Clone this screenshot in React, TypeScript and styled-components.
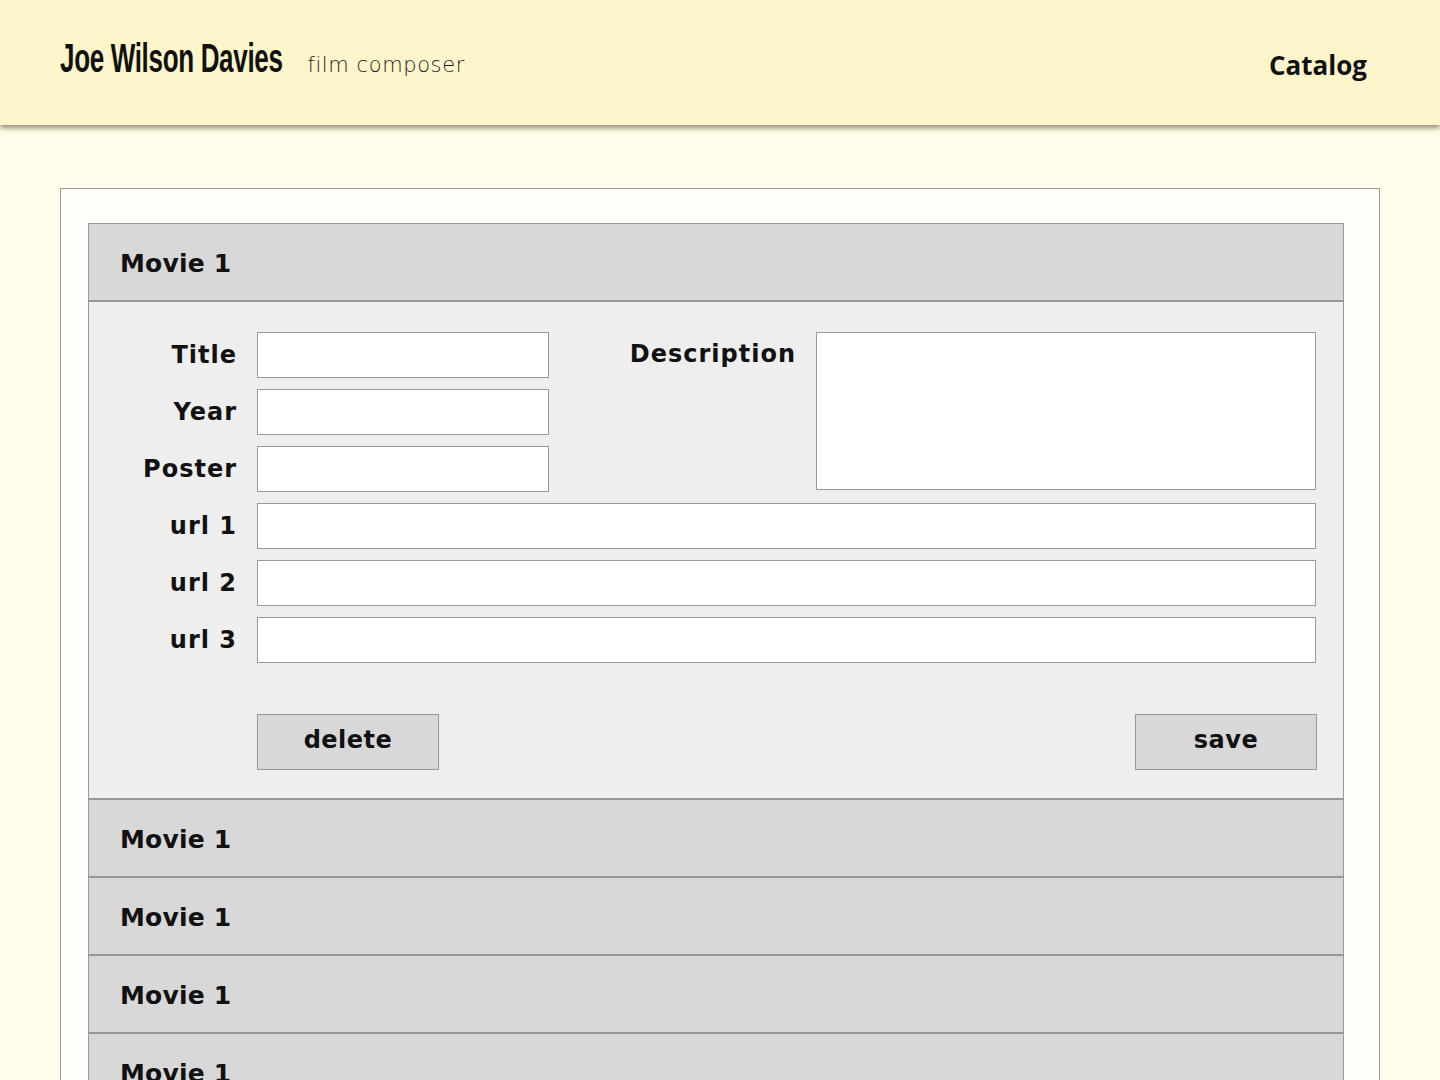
import * as React from "react";
import styled, { createGlobalStyle } from "styled-components";

const GlobalStyle = createGlobalStyle`
  html, body {
    margin: 0;
    padding: 0;
    height: 100%;
    overflow: hidden;
    background: #fffde9;
  }
  * {
    box-sizing: border-box;
  }
`;

const Page = styled.div`
  height: 100vh;
  overflow: hidden;
  background: #fffde9;
  font-family: "DejaVu Sans", sans-serif;
  color: #111;
`;

const Header = styled.header`
  height: 125px;
  background: #fef5cb;
  box-shadow: 0 3px 5px rgba(60, 50, 20, 0.55);
  display: flex;
  align-items: center;
  justify-content: space-between;
  padding: 0 73px 0 60px;
  position: relative;
  z-index: 1;
`;

const Brand = styled.div`
  display: flex;
  align-items: baseline;
  padding-bottom: 8px;
`;

const BrandName = styled.h1`
  margin: 0 -119px 0 0;
  font-family: "Liberation Sans Narrow", "Liberation Sans", sans-serif;
  font-stretch: condensed;
  font-weight: 700;
  font-size: 40px;
  letter-spacing: -0.5px;
  transform: scaleX(0.65);
  transform-origin: left center;
  color: #111;
`;

const Tagline = styled.span`
  margin-left: 24px;
  font-family: "DejaVu Sans", sans-serif;
  font-weight: 200;
  font-size: 21px;
  letter-spacing: 0.6px;
  color: #1a1a1a;
`;

const NavLink = styled.a`
  font-family: "Open Sans", sans-serif;
  font-weight: 700;
  font-size: 26px;
  color: #111;
  text-decoration: none;
  padding-top: 4px;
`;

const Panel = styled.main`
  margin: 63px 60px 0;
  min-height: 1000px;
  background: #fffdf8;
  border: 1px solid #999;
  padding: 34px 35px 0 27px;
`;

const MovieList = styled.div`
  display: flex;
  flex-direction: column;
`;

const MovieHeader = styled.div`
  height: 78px;
  background: #d8d8d8;
  border: 1px solid #999;
  display: flex;
  align-items: center;
  padding: 3px 0 0 31px;
  font-size: 25px;
  font-weight: 700;
  letter-spacing: 0.2px;
`;

const MovieBody = styled.div`
  background: #eeeeee;
  border: 1px solid #999;
  padding: 30px 26px 28px 0;
`;

const FormGrid = styled.div`
  display: grid;
  grid-template-columns: 148px 292px 227px 500px;
  grid-auto-rows: 46px;
  column-gap: 20px;
  row-gap: 11px;
`;

const Label = styled.label<{ $col?: number; $top?: boolean }>`
  grid-column: ${(p) => p.$col ?? 1};
  text-align: right;
  align-self: ${(p) => (p.$top ? "start" : "center")};
  line-height: ${(p) => (p.$top ? "44px" : "normal")};
  font-size: 24px;
  font-weight: 700;
  letter-spacing: 1px;
  white-space: nowrap;
`;

const TextInput = styled.input<{ $wide?: boolean }>`
  grid-column: ${(p) => (p.$wide ? "2 / 5" : "2")};
  height: 46px;
  border: 1px solid #999;
  background: #fff;
  margin: 0;
  padding: 0 8px;
  font-size: 18px;
  font-family: inherit;
  outline: none;
`;

const TextArea = styled.textarea`
  grid-column: 4;
  grid-row: 1 / span 3;
  height: 158px;
  border: 1px solid #999;
  background: #fff;
  margin: 0;
  resize: none;
  outline: none;
`;

const Actions = styled.div`
  display: flex;
  justify-content: space-between;
  margin: 51px 0 0 168px;
`;

const Button = styled.button`
  width: 182px;
  height: 56px;
  background: #d8d8d8;
  border: 1px solid #999;
  font-family: "DejaVu Sans", sans-serif;
  font-size: 24px;
  font-weight: 700;
  letter-spacing: 0.5px;
  color: #111;
  padding: 0 0 4px;
  cursor: pointer;
`;

const collapsed = ["Movie 1", "Movie 1", "Movie 1", "Movie 1", "Movie 1"];

export default function App() {
  return (
    <Page>
      <GlobalStyle />
      <Header>
        <Brand>
          <BrandName>Joe Wilson Davies</BrandName>
          <Tagline>film composer</Tagline>
        </Brand>
        <NavLink href="#">Catalog</NavLink>
      </Header>

      <Panel>
        <MovieList>
          <MovieHeader>Movie 1</MovieHeader>
          <MovieBody>
            <FormGrid>
              <Label>Title</Label>
              <TextInput />
              <Label $col={3} $top>
                Description
              </Label>
              <TextArea />
              <Label>Year</Label>
              <TextInput />
              <Label>Poster</Label>
              <TextInput />
              <Label>url 1</Label>
              <TextInput $wide />
              <Label>url 2</Label>
              <TextInput $wide />
              <Label>url 3</Label>
              <TextInput $wide />
            </FormGrid>
            <Actions>
              <Button>delete</Button>
              <Button>save</Button>
            </Actions>
          </MovieBody>
          {collapsed.map((name, i) => (
            <MovieHeader key={i}>{name}</MovieHeader>
          ))}
        </MovieList>
      </Panel>
    </Page>
  );
}
